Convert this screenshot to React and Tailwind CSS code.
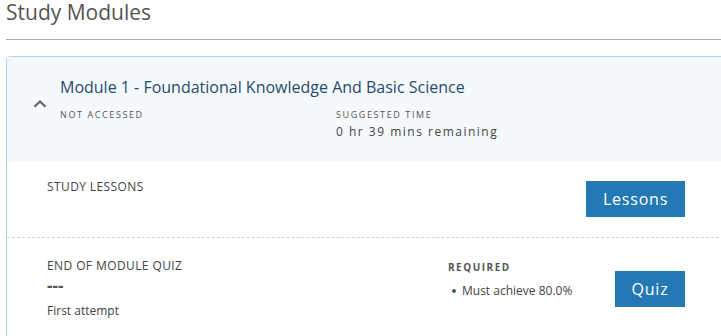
import React from 'react';

const ChevronUp = () => (
  <svg width="14" height="8" viewBox="0 0 14 8" fill="none">
    <polyline points="1.5,6.8 7,1.5 12.5,6.8" stroke="#5f5f5f" strokeWidth="2" />
  </svg>
);

const ModuleHeader = () => (
  <div className="flex h-[104px] bg-[#f4f9fc]">
    <div className="w-[53px] pl-[26px] pt-[43px]">
      <ChevronUp />
    </div>
    <div className="pt-[19px]">
      <h3 className="text-[16px] leading-[22px] text-[#2a4a6c]">
        Module 1 - Foundational Knowledge And Basic Science
      </h3>
      <div className="flex mt-[11px]">
        <div className="w-[276px] text-[9px] leading-[12px] tracking-[1.6px] text-[#555]">NOT ACCESSED</div>
        <div>
          <div className="text-[9px] leading-[12px] tracking-[1.6px] text-[#555]">SUGGESTED TIME</div>
          <div className="mt-[3px] text-[12px] leading-[16px] tracking-[1.5px] text-[#444]">
            0 hr 39 mins remaining
          </div>
        </div>
      </div>
    </div>
  </div>
);

const App = () => {
  return (
    <div className="w-[721px] h-[336px] overflow-hidden bg-white font-['Open_Sans',sans-serif]">
      <div className="pl-[6px] w-[760px]">
        <h2 className="text-[21px] leading-[28px] -mt-[2px] text-[#555]">Study Modules</h2>
        <div className="mt-[13px] h-px bg-[#aaaaaa]" />

        <div className="mt-[16px] border border-[#a9d8ef] rounded-tl-[4px] rounded-tr-[4px]">
          <ModuleHeader />

          {/* lessons row */}
          <div className="h-[77px] border-b border-dashed border-[#d4d4d4]">
            <div className="flex w-[678px] pl-[40px] pt-[18px]">
              <div className="flex-1 text-[12px] leading-[16px] tracking-[0.4px] text-[#444]">STUDY LESSONS</div>
              <button className="mt-[2px] w-[99px] h-[36px] bg-[#2279b4] text-white text-[16px] tracking-[0.8px]">
                Lessons
              </button>
            </div>
          </div>

          {/* quiz row */}
          <div className="h-[120px]">
            <div className="flex w-[678px] pl-[40px] pt-[20px]">
              <div className="w-[401px]">
                <div className="text-[12px] leading-[16px] tracking-[0.4px] text-[#444]">END OF MODULE QUIZ</div>
                <div className="mt-[2px] text-[17px] leading-[20px] font-bold text-[#555]">---</div>
                <div className="mt-[7px] text-[12px] leading-[16px] text-[#444]">First attempt</div>
              </div>
              <div className="w-[167px] pt-[2px]">
                <div className="text-[10px] leading-[14px] font-bold tracking-[1.5px] text-[#555]">REQUIRED</div>
                <div className="mt-[9px] flex items-center text-[12px] leading-[16px] text-[#444]">
                  <span className="ml-[4px] mr-[6px] w-[4px] h-[4px] rounded-full bg-[#555]" />
                  Must achieve 80.0%
                </div>
              </div>
              <button className="mt-[13px] w-[70px] h-[36px] bg-[#2279b4] text-white text-[16px] tracking-[0.8px]">
                Quiz
              </button>
            </div>
          </div>
        </div>
      </div>
    </div>
  );
};

export default App;
